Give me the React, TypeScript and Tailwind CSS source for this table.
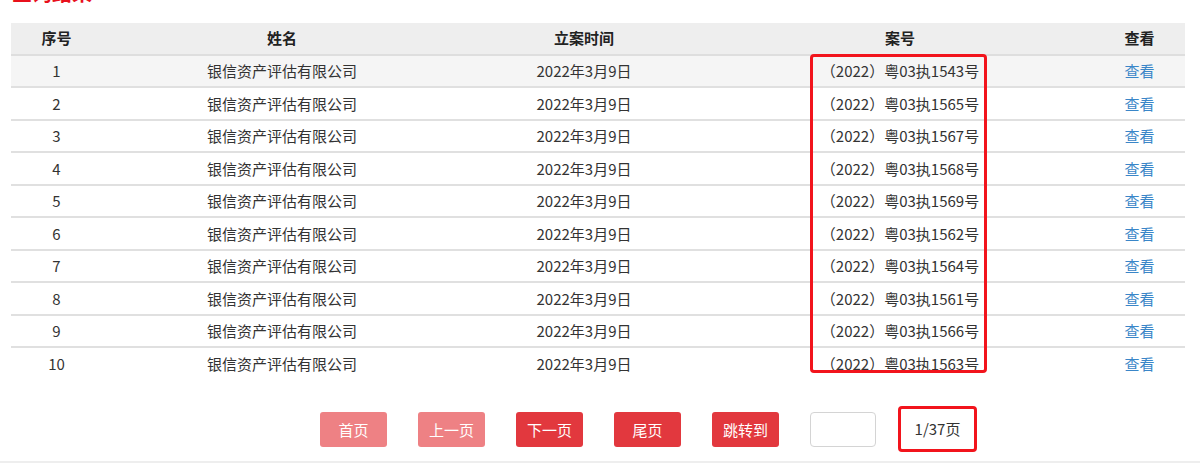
import React from "react";

const cases = ["1543", "1565", "1567", "1568", "1569", "1562", "1564", "1561", "1566", "1563"];

const cols = "grid grid-cols-[91px_360px_244px_388px_91px] items-center text-center";

export default function App() {
  return (
    <div className="relative h-[463px] w-[1200px] overflow-hidden bg-white font-['Noto_Sans_CJK_SC','Microsoft_YaHei',sans-serif] text-[15px] text-[#333]">
      {/* Section title, mostly scrolled off the top */}
      <div className="-mt-[19px] h-[42px] pl-[12px] text-[20px] leading-[24px] font-bold text-[#e8101c]">查询结果</div>

      {/* Result table */}
      <div className="mx-[11px] w-[1174px]">
        <div className={`${cols} h-[33px] border-b-2 border-[#dedede] bg-[#eeeeee] font-bold text-[#222]`}>
          <div>序号</div>
          <div>姓名</div>
          <div>立案时间</div>
          <div>案号</div>
          <div>查看</div>
        </div>
        {cases.map((no, i) => (
          <div
            key={no}
            className={`${cols} h-[32.44px] pt-px ${i === cases.length - 1 ? "" : "border-b-2 border-[#e0e0e0]"} ${i === 0 ? "bg-[#f5f5f5]" : "bg-white"}`}
          >
            <div>{i + 1}</div>
            <div>银信资产评估有限公司</div>
            <div>2022年3月9日</div>
            <div>（2022）粤03执{no}号</div>
            <div>
              <a href="#" className="text-[#3a86c8]">查看</a>
            </div>
          </div>
        ))}
      </div>

      {/* Highlight around case numbers */}
      <div className="pointer-events-none absolute left-[810px] top-[54px] h-[319px] w-[177px] rounded-[4px] border-[3px] border-[#f2141c]" />

      {/* Pagination */}
      <div className="mt-[32px] flex h-[51px] items-start gap-[31px] border-b-2 border-[#eeeeee] pl-[320px]">
        <button className="h-[35px] w-[67px] rounded-[3px] bg-[#ee8184] text-white">首页</button>
        <button className="h-[35px] w-[67px] rounded-[3px] bg-[#ee8184] text-white">上一页</button>
        <button className="h-[35px] w-[67px] rounded-[3px] bg-[#e2383e] text-white">下一页</button>
        <button className="h-[35px] w-[67px] rounded-[3px] bg-[#e2383e] text-white">尾页</button>
        <button className="h-[35px] w-[67px] rounded-[3px] bg-[#e2383e] text-white">跳转到</button>
        <input className="h-[35px] w-[66px] rounded-[4px] border border-[#d4d4d4] bg-white outline-none" />
        <span className="-mt-[6px] ml-[-9px] flex h-[46px] w-[79px] items-center justify-center rounded-[4px] border-[3px] border-[#f2141c] text-[#333]">
          1/37页
        </span>
      </div>
    </div>
  );
}
